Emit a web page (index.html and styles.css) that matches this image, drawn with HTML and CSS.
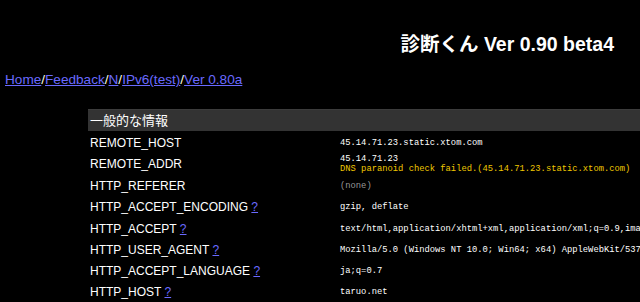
FILE: index.html
```html
<!DOCTYPE html>
<html lang="ja">
<head>
    <meta charset="UTF-8">
    <title>診断くん</title>
    <link rel="stylesheet" href="styles.css">
</head>
<body>
    <h1 class="title">診断くん Ver 0.90 beta4</h1>

    <div class="crumbs">
        <a href="#">Home</a>/<a href="#">Feedback</a>/<a href="#">N</a>/<a href="#">IPv6(test)</a>/<a href="#">Ver 0.80a</a>
    </div>

    <table class="info">
        <tr class="info-head">
            <th colspan="2">一般的な情報</th>
        </tr>
        <tr>
            <td class="key">REMOTE_HOST</td>
            <td class="val">45.14.71.23.static.xtom.com</td>
        </tr>
        <tr>
            <td class="key">REMOTE_ADDR</td>
            <td class="val">45.14.71.23<br><span class="warn">DNS paranoid check failed.(45.14.71.23.static.xtom.com)</span></td>
        </tr>
        <tr>
            <td class="key">HTTP_REFERER</td>
            <td class="val none">(none)</td>
        </tr>
        <tr>
            <td class="key">HTTP_ACCEPT_ENCODING <a href="#" class="help">?</a></td>
            <td class="val">gzip, deflate</td>
        </tr>
        <tr>
            <td class="key">HTTP_ACCEPT <a href="#" class="help">?</a></td>
            <td class="val">text/html,application/xhtml+xml,application/xml;q=0.9,image/avif,image/webp,*/*;q=0.8</td>
        </tr>
        <tr>
            <td class="key">HTTP_USER_AGENT <a href="#" class="help">?</a></td>
            <td class="val">Mozilla/5.0 (Windows NT 10.0; Win64; x64) AppleWebKit/537.36 (KHTML, like Gecko)</td>
        </tr>
        <tr>
            <td class="key">HTTP_ACCEPT_LANGUAGE <a href="#" class="help">?</a></td>
            <td class="val">ja;q=0.7</td>
        </tr>
        <tr>
            <td class="key">HTTP_HOST <a href="#" class="help">?</a></td>
            <td class="val">taruo.net</td>
        </tr>
    </table>
</body>
</html>
```

FILE: styles.css
```css
html {
    overflow: hidden;
}

body {
    margin: 0;
    background-color: #000;
    color: #fff;
    font-family: "Liberation Sans", "Noto Sans CJK JP", sans-serif;
}

.title {
    margin: 33px 26px 0 0;
    text-align: right;
    font-size: 19.5px;
    line-height: 22px;
    font-weight: bold;
}

.crumbs {
    margin-top: 17px;
    padding-left: 5px;
    font-size: 13.6px;
    line-height: 16px;
    color: #ffd;
}

.crumbs a, .help {
    color: #6a6aff;
}

.info {
    margin: 21px 0 0 88px;
    width: 900px;
    border-collapse: collapse;
}

.info-head th {
    background-color: #333;
    border-top: 1px solid #3c3c3c;
    text-align: left;
    font-weight: normal;
    font-size: 13px;
    line-height: 16px;
    height: 21px;
    padding: 0 2px;
}

.info td {
    height: 19.3px;
    padding: 2px 2px 0;
    line-height: 14px;
}

.key {
    width: 246px;
    font-size: 12px;
    white-space: nowrap;
}

.val {
    font-family: "Liberation Mono", monospace;
    font-size: 8.8px;
    white-space: nowrap;
}

.info td.val {
    line-height: 10px;
}

.warn {
    color: #f0c800;
}

.none {
    color: #999;
}
```
